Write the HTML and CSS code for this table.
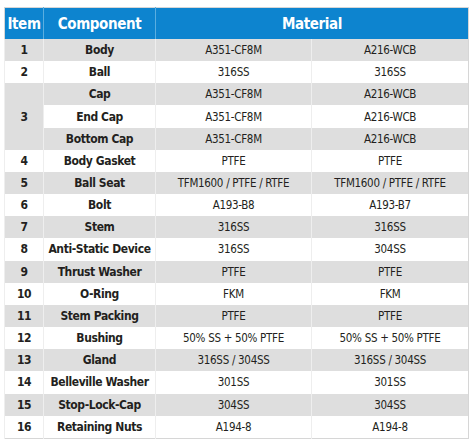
FILE: index.html
```html
<!DOCTYPE html>
<html>
<head>
<meta charset="utf-8">
<link rel="stylesheet" href="styles.css">
</head>
<body>
<table class="spec">
  <colgroup>
    <col class="c-item"><col class="c-comp"><col class="c-mat"><col class="c-mat2">
  </colgroup>
  <thead>
    <tr><th>Item</th><th>Component</th><th colspan="2">Material</th></tr>
  </thead>
  <tbody>
    <tr class="g"><td class="n">1</td><td class="n">Body</td><td>A351-CF8M</td><td>A216-WCB</td></tr>
    <tr><td class="n">2</td><td class="n">Ball</td><td>316SS</td><td>316SS</td></tr>
    <tr class="g"><td class="n" rowspan="3">3</td><td class="n">Cap</td><td>A351-CF8M</td><td>A216-WCB</td></tr>
    <tr><td class="n">End Cap</td><td>A351-CF8M</td><td>A216-WCB</td></tr>
    <tr class="g"><td class="n">Bottom Cap</td><td>A351-CF8M</td><td>A216-WCB</td></tr>
    <tr><td class="n">4</td><td class="n">Body Gasket</td><td>PTFE</td><td>PTFE</td></tr>
    <tr class="g"><td class="n">5</td><td class="n">Ball Seat</td><td>TFM1600 / PTFE / RTFE</td><td>TFM1600 / PTFE / RTFE</td></tr>
    <tr><td class="n">6</td><td class="n">Bolt</td><td>A193-B8</td><td>A193-B7</td></tr>
    <tr class="g"><td class="n">7</td><td class="n">Stem</td><td>316SS</td><td>316SS</td></tr>
    <tr><td class="n">8</td><td class="n">Anti-Static Device</td><td>316SS</td><td>304SS</td></tr>
    <tr class="g"><td class="n">9</td><td class="n">Thrust Washer</td><td>PTFE</td><td>PTFE</td></tr>
    <tr><td class="n">10</td><td class="n">O-Ring</td><td>FKM</td><td>FKM</td></tr>
    <tr class="g"><td class="n">11</td><td class="n">Stem Packing</td><td>PTFE</td><td>PTFE</td></tr>
    <tr><td class="n">12</td><td class="n">Bushing</td><td>50% SS + 50% PTFE</td><td>50% SS + 50% PTFE</td></tr>
    <tr class="g"><td class="n">13</td><td class="n">Gland</td><td>316SS / 304SS</td><td>316SS / 304SS</td></tr>
    <tr><td class="n">14</td><td class="n">Belleville Washer</td><td>301SS</td><td>301SS</td></tr>
    <tr class="g"><td class="n">15</td><td class="n">Stop-Lock-Cap</td><td>304SS</td><td>304SS</td></tr>
    <tr><td class="n">16</td><td class="n">Retaining Nuts</td><td>A194-8</td><td>A194-8</td></tr>
  </tbody>
</table>
</body>
</html>
```
FILE: styles.css
```css
html, body {
  margin: 0;
  background: #ffffff;
}
body {
  padding: 7px 0 0 4px;
}
.spec {
  border-collapse: collapse;
  table-layout: fixed;
  width: 464px;
  border: 1px solid #d6d6d6;
  font-family: "DejaVu Sans Condensed", "DejaVu Sans", sans-serif;
  font-stretch: condensed;
  color: #231f20;
}
.c-item { width: 39px; }
.c-comp { width: 112px; }
.c-mat { width: 156px; }
.c-mat2 { width: 157px; }
.spec th {
  background: #0d84cf;
  color: #ffffff;
  height: 31px;
  padding: 0;
  font-size: 15px;
  font-weight: bold;
  letter-spacing: -0.4px;
  border-left: 1px solid #5aaee0;
  text-align: center;
}
.spec th:first-child { border-left: none; }
.spec td {
  height: 22.17px;
  padding: 0;
  text-align: center;
  font-size: 11.5px;
  letter-spacing: -0.3px;
  border-left: 1px solid #eeeeee;
  white-space: nowrap;
}
.spec td.n {
  font-weight: bold;
  font-size: 12px;
  letter-spacing: -0.4px;
}
.spec tr.g td { background: #dedede; }
.spec td[rowspan] { background: #dedede; }
```
